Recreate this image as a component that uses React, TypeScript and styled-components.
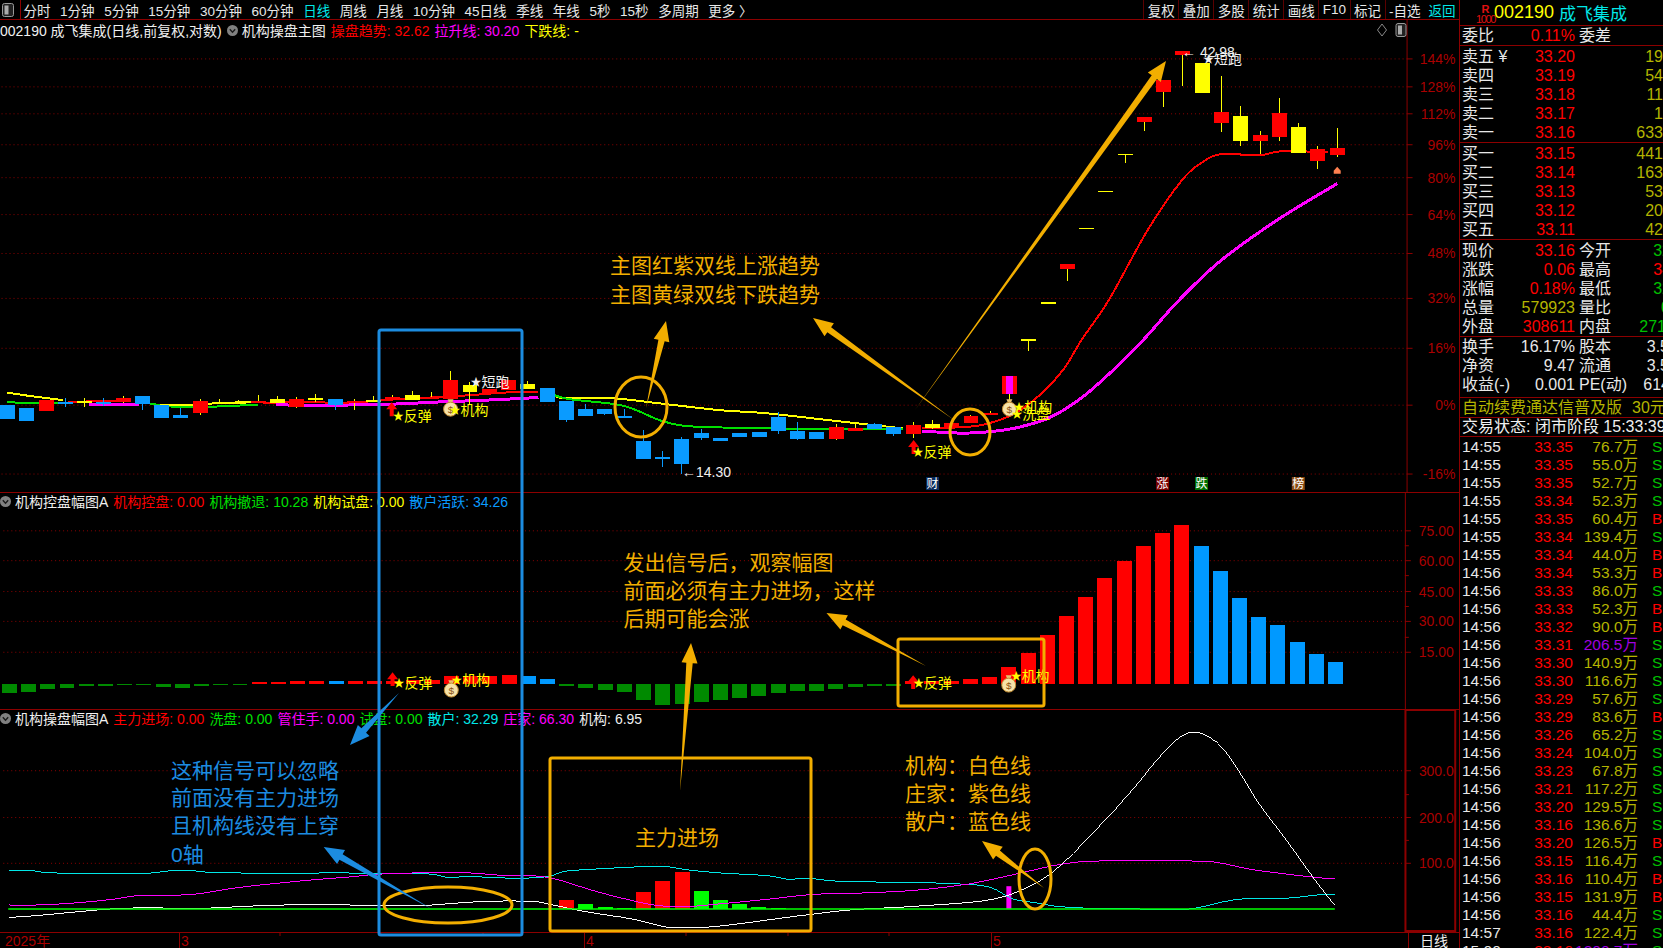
import styled, { createGlobalStyle } from "styled-components";

type Pt = [number, number];

const FONT = `"Liberation Sans", "Noto Sans CJK SC", sans-serif`;
const RULE = "#8c0000";
const RED = "#ff0000";
const YELLOW = "#ffff00";
const BLUE = "#0a9bff";
const GREEN = "#00e000";
const MAGENTA = "#ff00ff";
const CYAN = "#00e8e8";
const OLIVE = "#b4b400";
const AMBER = "#f2ae00";
const NOTE_BLUE = "#1c8ce0";
const SCALE_RED = "#aa0000";

const barX = (i: number) => 6 + 19.31 * i;

// traced from the crops, each with its own offset and horizontal scale
const fromCrop = (ox: number, oy: number, sx: number, pts: Pt[]): Pt[] =>
  pts.map(([x, y]) => [ox + x / sx, oy + y / 3]);
const cropA = (pts: Pt[]) => fromCrop(0, 340, 2.178, pts);
const cropB = (pts: Pt[]) => fromCrop(720, 340, 2.178, pts);
const cropC = (pts: Pt[]) => fromCrop(830, 0, 1.882, pts);
const cropD = (pts: Pt[]) => fromCrop(0, 708, 2.178, pts);
const cropE = (pts: Pt[]) => fromCrop(720, 708, 2.178, pts);
const toPoints = (pts: Pt[]) => pts.map((p) => p.join(",")).join(" ");

// catmull-rom through the traced points
const smoothPath = (pts: Pt[]) => {
  let d = `M${pts[0][0]} ${pts[0][1]}`;
  for (let i = 0; i < pts.length - 1; i++) {
    const p0 = pts[i - 1] || pts[i];
    const p1 = pts[i];
    const p2 = pts[i + 1];
    const p3 = pts[i + 2] || p2;
    const c1 = [p1[0] + (p2[0] - p0[0]) / 6, p1[1] + (p2[1] - p0[1]) / 6];
    const c2 = [p2[0] - (p3[0] - p1[0]) / 6, p2[1] - (p3[1] - p1[1]) / 6];
    d += `C${c1[0]} ${c1[1]} ${c2[0]} ${c2[1]} ${p2[0]} ${p2[1]}`;
  }
  return d;
};

type Kind = "r" | "y" | "b";
type Candle = [Kind, number, number, number?, number?];

const CANDLES: Candle[] = [
  ["b", 406, 420], ["b", 409, 422], ["r", 401, 412], ["b", 403, 404, 399, 408],
  ["y", 402, 403, 399, 408], ["b", 403, 404, 399, 407], ["r", 399, 403, 397, 404], ["b", 397, 405, 397, 411],
  ["b", 406, 419], ["b", 416, 419, 409, 419], ["r", 402, 414, 400, 416], ["y", 403, 405, 400, 405],
  ["y", 403, 405, 401, 405], ["r", 402, 404, 396, 404], ["y", 400, 404, 397, 404], ["r", 400, 408, 398, 409],
  ["y", 399, 401, 395, 403], ["b", 400, 406, 400, 411], ["r", 402, 404, 400, 411], ["y", 401, 403, 397, 403],
  ["r", 398, 399, 396, 399], ["y", 396, 401, 392, 401], ["r", 398, 399, 393, 399], ["r", 381, 400, 372, 400],
  ["y", 386, 393, 383, 405], ["r", 390, 395], ["r", 381, 391], ["y", 385, 390, 382, 390],
  ["b", 389, 403], ["b", 402, 421, 402, 423], ["b", 410, 417, 405, 417], ["b", 410, 415, 410, 416],
  ["b", 417, 419, 410, 419], ["b", 442, 460, 431, 460], ["b", 458, 459, 452, 468], ["b", 440, 465, 438, 475],
  ["b", 434, 439, 430, 441], ["b", 439, 442], ["b", 434, 438], ["b", 433, 438],
  ["b", 418, 432, 413, 435], ["b", 432, 440, 423, 441], ["b", 433, 440], ["r", 428, 440, 425, 441],
  ["r", 429, 432, 425, 432], ["b", 425, 430, 424, 430], ["b", 428, 435, 428, 437], ["r", 426, 435, 423, 439],
  ["y", 425, 429, 421, 430], ["r", 424, 429], ["r", 417, 424, 416, 424], ["r", 414, 416, 412, 416],
  ["r", 377, 395, 395, 410], ["y", 340, 340, 340, 352], ["y", 303, 303], ["r", 265, 270, 265, 282],
  ["y", 228, 228], ["y", 191, 191], ["y", 154, 154, 154, 163], ["r", 117, 122, 117, 131],
  ["r", 80, 92, 80, 107], ["r", 51, 55, 51, 86], ["y", 63, 93], ["r", 112, 123, 76, 132],
  ["y", 116, 141, 106, 146], ["r", 135, 141, 131, 154], ["r", 113, 137, 98, 141], ["y", 127, 153, 123, 153],
  ["r", 149, 161, 146, 169], ["r", 148, 155, 128, 157],
];

const TREND_LINES: { color: string; width: number; pts: Pt[] }[] = [
  { color: YELLOW, width: 2, pts: cropA([[12, 160], [60, 170], [135, 183]]) },
  { color: GREEN, width: 2, pts: cropA([[12, 188], [50, 192], [80, 192], [135, 190]]) },
  { color: RED, width: 2, pts: cropA([[145, 188], [180, 187], [280, 186]]) },
  { color: MAGENTA, width: 3, pts: cropA([[190, 196], [300, 197]]) },
  { color: GREEN, width: 2, pts: cropA([[325, 193], [380, 203], [470, 202], [560, 196]]) },
  { color: YELLOW, width: 2, pts: cropA([[345, 197], [415, 198], [470, 192], [560, 188]]) },
  { color: RED, width: 2, pts: cropA([[570, 193], [640, 188], [760, 191], [840, 182], [1000, 170], [1100, 160], [1170, 158]]) },
  { color: MAGENTA, width: 3, pts: cropA([[600, 196], [660, 199], [730, 198], [850, 195], [960, 188], [1040, 184], [1130, 178], [1172, 175]]) },
  { color: YELLOW, width: 2, pts: [...cropA([[1210, 174], [1240, 177], [1340, 178], [1420, 190], [1568, 213]]), ...cropB([[100, 222], [250, 245], [400, 268]])] },
  { color: GREEN, width: 2, pts: [...cropA([[1205, 167], [1240, 180], [1340, 195], [1380, 210], [1440, 245], [1490, 260], [1568, 265]]), ...cropB([[240, 270], [400, 270]])] },
  { color: RED, width: 2, pts: [...cropB([[440, 268], [530, 264], [580, 255], [640, 225], [700, 165], [750, 90], [790, 0]]), ...cropC([[527, 900], [600, 690], [665, 540], [705, 485], [740, 463], [810, 467], [850, 455], [940, 457]])] },
  { color: MAGENTA, width: 3, pts: [...cropB([[440, 276], [530, 282], [600, 276], [650, 265], [720, 235], [790, 175], [860, 90], [925, 0]]), ...cropC([[660, 900], [740, 780], [850, 655], [957, 552]])] },
];

const SWING_BASE = 684.5;
const SWING_BARS: [Kind | "g", number][] = [
  ["g", 9.3], ["g", 8.7], ["g", 5.7], ["g", 4.7], ["g", 2.7], ["g", 2.7], ["g", 1], ["g", 1], ["g", 3.7], ["g", 4.7],
  ["g", 2.7], ["g", 1.7], ["g", 1], ["r", 2], ["r", 2], ["r", 3], ["r", 3], ["b", 3], ["r", 3], ["r", 3],
  ["r", 3], ["r", 4], ["r", 4], ["r", 8], ["r", 8], ["r", 8], ["r", 9], ["b", 8], ["b", 5], ["g", 2.7],
  ["g", 4.7], ["g", 6.7], ["g", 8.7], ["g", 16.7], ["g", 21.7], ["g", 20.7], ["g", 18.7], ["g", 16.7], ["g", 14.7], ["g", 12.7],
  ["g", 9.7], ["g", 7.7], ["g", 7.7], ["g", 5.7], ["g", 3.7], ["g", 2.7], ["g", 2.7], ["r", 3], ["r", 3], ["r", 3],
  ["r", 5], ["r", 7], ["r", 17], ["r", 31], ["r", 49], ["r", 68], ["r", 87], ["r", 106], ["r", 123], ["r", 138],
  ["r", 151], ["r", 159], ["b", 138], ["b", 113], ["b", 86], ["b", 67], ["b", 59], ["b", 42], ["b", 30], ["b", 22],
];

const FUND_BASE = 910;
const FUND_BARS: [number, string, number][] = [
  [29, RED, 9], [30, "#00ff00", 5], [31, "#00ff00", 2], [32, "#00ff00", 1], [33, RED, 17], [34, RED, 28], [35, RED, 37],
  [36, "#00ff00", 18], [37, "#00ff00", 9], [38, "#00ff00", 5], [39, "#00ff00", 2], [40, "#00ff00", 1],
];

const FUND_LINES: { color: string; pts: Pt[] }[] = [
  { color: CYAN, pts: [...cropD([[12, 490], [60, 490], [90, 495], [160, 499], [300, 499], [370, 490], [410, 490], [470, 496], [660, 499], [700, 497], [830, 498], [930, 500], [975, 511], [1020, 508], [1120, 513], [1190, 508], [1230, 492], [1300, 485], [1400, 478], [1450, 478], [1500, 488], [1568, 497]]), ...cropE([[100, 505], [150, 516], [190, 513], [270, 523], [400, 525], [520, 530], [590, 540], [640, 575], [690, 587], [740, 598], [820, 604], [900, 605], [1020, 607], [1130, 577], [1240, 573], [1310, 563], [1345, 563]])] },
  { color: MAGENTA, pts: [...cropD([[12, 593], [35, 595], [130, 590], [230, 578], [300, 565], [410, 562], [520, 540], [660, 520], [750, 510], [810, 502], [870, 498], [1000, 496], [1100, 505], [1190, 510], [1290, 550], [1360, 575], [1430, 595], [1500, 598], [1568, 590]]), ...cropE([[100, 577], [200, 562], [300, 558], [420, 550], [520, 535], [600, 515], [680, 490], [750, 470], [830, 461], [1030, 461], [1090, 466], [1170, 488], [1300, 510], [1345, 514]])] },
  { color: "#ffffff", pts: [...cropD([[12, 631], [60, 627], [140, 617], [240, 605], [330, 602], [410, 605], [560, 596], [690, 592], [830, 596], [920, 595], [1000, 587], [1070, 582], [1160, 583], [1200, 593], [1280, 615], [1380, 637], [1450, 660], [1500, 661], [1568, 657]]), ...cropE([[180, 625], [290, 608], [420, 598], [590, 578], [680, 535], [740, 480], [810, 385], [900, 250], [960, 150], [1010, 85], [1050, 75], [1095, 115], [1135, 190], [1180, 290], [1240, 400], [1300, 515], [1345, 595]])] },
];

const MAIN_SCALE: [string, number][] = [
  ["144%", 59], ["128%", 87], ["112%", 114], ["96%", 145], ["80%", 178], ["64%", 215],
  ["48%", 254], ["32%", 299], ["16%", 349], ["0%", 406], ["-16%", 475],
];
const SWING_SCALE: [string, number][] = [["75.00", 531], ["60.00", 561], ["45.00", 592], ["30.00", 622], ["15.00", 653]];
const FUND_SCALE: [string, number][] = [["300.0", 771], ["200.0", 818], ["100.0", 864]];

const SELL = [["卖五 ¥", "33.20", "19"], ["卖四", "33.19", "54"], ["卖三", "33.18", "11"], ["卖二", "33.17", "1"], ["卖一", "33.16", "633"]];
const BUY = [["买一", "33.15", "441"], ["买二", "33.14", "163"], ["买三", "33.13", "53"], ["买四", "33.12", "20"], ["买五", "33.11", "42"]];

const TRADES: [string, string, string, "S" | "B"][] = [
  ["14:55", "33.35", "76.7万", "S"], ["14:55", "33.35", "55.0万", "S"], ["14:55", "33.35", "52.7万", "S"],
  ["14:55", "33.34", "52.3万", "S"], ["14:55", "33.35", "60.4万", "B"], ["14:55", "33.34", "139.4万", "S"],
  ["14:55", "33.34", "44.0万", "B"], ["14:56", "33.34", "53.3万", "B"], ["14:56", "33.33", "86.0万", "S"],
  ["14:56", "33.33", "52.3万", "B"], ["14:56", "33.32", "90.0万", "B"], ["14:56", "33.31", "206.5万", "S"],
  ["14:56", "33.30", "140.9万", "S"], ["14:56", "33.30", "116.6万", "S"], ["14:56", "33.29", "57.6万", "S"],
  ["14:56", "33.29", "83.6万", "B"], ["14:56", "33.26", "65.2万", "S"], ["14:56", "33.24", "104.0万", "S"],
  ["14:56", "33.23", "67.8万", "S"], ["14:56", "33.21", "117.2万", "S"], ["14:56", "33.20", "129.5万", "S"],
  ["14:56", "33.16", "136.6万", "S"], ["14:56", "33.20", "126.5万", "B"], ["14:56", "33.15", "116.4万", "S"],
  ["14:56", "33.16", "110.4万", "B"], ["14:56", "33.15", "131.9万", "B"], ["14:56", "33.16", "44.4万", "S"],
  ["14:57", "33.16", "122.4万", "S"], ["15:00", "33.16", "1200.7万", "S"],
];

const PERIODS = ["分时", "1分钟", "5分钟", "15分钟", "30分钟", "60分钟", "日线", "周线", "月线", "10分钟", "45日线", "季线", "年线", "5秒", "15秒", "多周期", "更多 〉"];
const TOOLS = ["复权", "叠加", "多股", "统计", "画线", "F10", "标记", "-自选", "返回"];

function Arrow({ from, to, color }: { from: Pt; to: Pt; color: string }) {
  const dx = to[0] - from[0];
  const dy = to[1] - from[1];
  const len = Math.hypot(dx, dy);
  const ux = dx / len;
  const uy = dy / len;
  const nx = -uy;
  const ny = ux;
  const neck: Pt = [to[0] - ux * 20, to[1] - uy * 20];
  const at = (base: Pt, off: number): Pt => [base[0] + nx * off, base[1] + ny * off];
  const pts = [from, at(neck, 3.2), at(neck, 8), to, at(neck, -8), at(neck, -3.2)];
  return <polygon points={toPoints(pts)} fill={color} />;
}

function MoneyBag({ x, y }: { x: number; y: number }) {
  return (
    <g>
      <path d={`M${x - 3} ${y - 10}h6l-1.5 3.5h-3z`} fill="#e8c070" />
      <circle cx={x} cy={y} r={7} fill="#f6e2a8" stroke="#c08a30" />
      <ChartLabel x={x} y={y} $size={10} $color="#8a5010" textAnchor="middle">
        $
      </ChartLabel>
    </g>
  );
}

function UpMark({ x, y }: { x: number; y: number }) {
  return <path d={`M${x} ${y}l5.5 7h-3.5v7h-4v-7h-3.5z`} fill={RED} />;
}

function SignalLabel({ x, y, text, color = YELLOW }: { x: number; y: number; text: string; color?: string }) {
  return (
    <ChartLabel x={x} y={y} $size={14} $color={color}>
      <StarMark>★</StarMark>
      {text}
    </ChartLabel>
  );
}

function Scale({ rows }: { rows: [string, number][] }) {
  return (
    <>
      {rows.map(([label, y]) => (
        <g key={label}>
          <GridLine x1={0} x2={1408} y1={y} y2={y} />
          <line x1={1408} x2={1414} y1={y} y2={y} stroke={RULE} />
          <ChartLabel x={1457} y={y} $size={14} $color={SCALE_RED} textAnchor="end">
            {label}
          </ChartLabel>
        </g>
      ))}
      <line x1={1408.5} x2={1408.5} y1={0} y2={948} stroke={RULE} />
    </>
  );
}

function MainPlot() {
  return (
    <PaneCanvas viewBox="0 20 1459 473">
      <Scale rows={MAIN_SCALE} />
      {TREND_LINES.map((l, i) => (
        <path key={i} d={smoothPath(l.pts)} fill="none" stroke={l.color} strokeWidth={l.width} shapeRendering="crispEdges" />
      ))}
      {CANDLES.map(([kind, top, bottom, wickTop, wickBottom], i) => {
        const x = barX(i);
        const color = kind === "r" ? RED : kind === "y" ? YELLOW : BLUE;
        return (
          <g key={i} shapeRendering="crispEdges">
            {wickTop !== undefined && (
              <line x1={x} x2={x} y1={wickTop} y2={wickBottom} stroke={kind === "b" ? BLUE : YELLOW} />
            )}
            <rect x={x - 7.5} y={top} width={15} height={Math.max(bottom - top, 1.5)} fill={color} />
            {i === 52 && <rect x={x - 3.5} y={top} width={7} height={bottom - top} fill={MAGENTA} />}
          </g>
        );
      })}
      <path d="M1338.5 167l3.5 4v3h-7v-3z" fill="#ff8050" />
      <UpMark x={391} y={403} />
      <SignalLabel x={392} y={417} text="反弹" />
      <MoneyBag x={450} y={410} />
      <SignalLabel x={449} y={411} text="机构" />
      <SignalLabel x={470} y={383} text="短跑" color="#f0f0f0" />
      <UpMark x={914} y={441} />
      <SignalLabel x={913} y={453} text="反弹" />
      <MoneyBag x={1010} y={410} />
      <SignalLabel x={1012} y={415} text="洗盘" />
      <SignalLabel x={1014} y={408} text="机构" />
      <ChartLabel x={1183} y={52} $size={14} $color="#f0f0f0">
        ← 42.98
      </ChartLabel>
      <SignalLabel x={1204} y={59} text="短跑" color="#f0f0f0" />
      <ChartLabel x={682} y={473} $size={14} $color="#f0f0f0">
        ←14.30
      </ChartLabel>
      <EventTag x={933} label="财" fill="#0a2a5c" />
      <EventTag x={1163.5} label="涨" fill="#7a0000" />
      <EventTag x={1202.5} label="跌" fill="#007000" />
      <EventTag x={1299.5} label="榜" fill="#8a4a10" />
    </PaneCanvas>
  );
}

function EventTag({ x, label, fill }: { x: number; label: string; fill: string }) {
  return (
    <g>
      <rect x={x - 6.5} y={478} width={13} height={13} fill={fill} />
      <ChartLabel x={x} y={484.5} $size={12} $color="#ffffff" textAnchor="middle">
        {label}
      </ChartLabel>
    </g>
  );
}

function SwingPlot() {
  const colors = { r: RED, b: "#0099ff", g: "#008a00", y: YELLOW };
  return (
    <PaneCanvas viewBox="0 493 1459 217">
      <Scale rows={SWING_SCALE} />
      {[546, 576, 607, 638].map((y) => (
        <line key={y} x1={1408} x2={1412} y1={y} y2={y} stroke={RULE} />
      ))}
      {SWING_BARS.map(([kind, h], i) => (
        <rect
          key={i}
          shapeRendering="crispEdges"
          x={barX(i) - 7.5}
          y={kind === "g" ? SWING_BASE : SWING_BASE - h}
          width={15}
          height={h}
          fill={colors[kind]}
        />
      ))}
      <UpMark x={391} y={673} />
      <SignalLabel x={392} y={684} text="反弹" />
      <MoneyBag x={450} y={691} />
      <SignalLabel x={450} y={681} text="机构" />
      <UpMark x={914} y={676} />
      <SignalLabel x={914} y={684} text="反弹" />
      <MoneyBag x={1010} y={686} />
      <SignalLabel x={1012} y={677} text="机构" />
    </PaneCanvas>
  );
}

function FundPlot() {
  return (
    <PaneCanvas viewBox="0 710 1459 223">
      <Scale rows={FUND_SCALE} />
      {[795, 841].map((y) => (
        <line key={y} x1={1408} x2={1412} y1={y} y2={y} stroke={RULE} />
      ))}
      <rect x={1408.5} y={710} width={50} height={222} fill="none" stroke={RULE} strokeWidth={2} />
      {FUND_BARS.map(([i, color, h]) => (
        <rect key={i} shapeRendering="crispEdges" x={barX(i) - 7.5} y={FUND_BASE - h} width={15} height={h} fill={color} />
      ))}
      <rect x={barX(52) - 2.5} y={887} width={5} height={23} fill={MAGENTA} />
      {FUND_LINES.map((l) => (
        <path key={l.color} d={smoothPath(l.pts)} fill="none" stroke={l.color} strokeWidth={1} shapeRendering="crispEdges" />
      ))}
      <line x1={5} x2={1337.5} y1={910} y2={910} stroke="#00ff00" strokeWidth={1.5} />
    </PaneCanvas>
  );
}

function Annotations() {
  return (
    <Overlay viewBox="0 0 1459 948">
      <g fill="none" stroke={NOTE_BLUE} strokeWidth={3}>
        <rect x={379} y={330} width={143} height={605} rx={2} />
      </g>
      <g fill="none" stroke={AMBER} strokeWidth={3}>
        <ellipse cx={641} cy={407} rx={26} ry={30} />
        <ellipse cx={970} cy={432} rx={20} ry={23} />
        <ellipse cx={448} cy={905} rx={64} ry={18} />
        <ellipse cx={1035} cy={879} rx={16} ry={30} />
        <rect x={898} y={639} width={146} height={67} rx={2} />
        <rect x={550} y={758} width={261} height={173} rx={2} />
      </g>
      <Arrow from={[915, 410]} to={[1166, 61]} color={AMBER} />
      <Arrow from={[954, 420]} to={[813, 318]} color={AMBER} />
      <Arrow from={[646, 408]} to={[666, 321]} color={AMBER} />
      <Arrow from={[926, 666]} to={[826.5, 613]} color={AMBER} />
      <Arrow from={[680, 791]} to={[691, 643]} color={AMBER} />
      <Arrow from={[1044, 888]} to={[982, 841]} color={AMBER} />
      <Arrow from={[399, 693]} to={[350, 745]} color={NOTE_BLUE} />
      <Arrow from={[431.6, 909]} to={[323.7, 847]} color={NOTE_BLUE} />
      <NoteLine x={610} y={265}>主图红紫双线上涨趋势</NoteLine>
      <NoteLine x={610} y={294}>主图黄绿双线下跌趋势</NoteLine>
      <NoteLine x={623.5} y={562}>发出信号后，观察幅图</NoteLine>
      <NoteLine x={623.5} y={590}>前面必须有主力进场，这样</NoteLine>
      <NoteLine x={623.5} y={618}>后期可能会涨</NoteLine>
      <NoteLine x={635} y={837}>主力进场</NoteLine>
      <NoteLine x={905} y={765}>机构：白色线</NoteLine>
      <NoteLine x={905} y={793}>庄家：紫色线</NoteLine>
      <NoteLine x={905} y={821}>散户：蓝色线</NoteLine>
      <NoteLine x={171} y={770} $color={NOTE_BLUE}>这种信号可以忽略</NoteLine>
      <NoteLine x={171} y={797} $color={NOTE_BLUE}>前面没有主力进场</NoteLine>
      <NoteLine x={171} y={825} $color={NOTE_BLUE}>且机构线没有上穿</NoteLine>
      <NoteLine x={171} y={854} $color={NOTE_BLUE}>0轴</NoteLine>
    </Overlay>
  );
}

function FoldMark() {
  return (
    <FoldIcon viewBox="0 0 11 11">
      <circle cx={5.5} cy={5.5} r={5.5} fill="#808080" />
      <path d="M2.8 4.2l2.7 3 2.7-3" fill="none" stroke="#1a1a1a" strokeWidth={1.4} />
    </FoldIcon>
  );
}

export default function App() {
  return (
    <Page>
      <GlobalStyle />
      <ChartColumn>
        <Toolbar>
          <PanelToggle viewBox="0 0 12 14">
            <rect x={0.5} y={0.5} width={11} height={13} rx={2} fill="#222" stroke="#999" />
            <rect x={2.5} y={2.5} width={4} height={9} fill="#aaa" />
          </PanelToggle>
          <PeriodList>
            {PERIODS.map((p) => (
              <Period key={p} $active={p === "日线"}>
                {p}
              </Period>
            ))}
          </PeriodList>
          <ToolList>
            {TOOLS.map((t) => (
              <ToolCell key={t} $active={t === "返回"}>
                {t}
              </ToolCell>
            ))}
          </ToolList>
        </Toolbar>

        <Pane $height={473}>
          <MainPlot />
          <Legend $height={20}>
            <LegendItem $color="#f0f0f0">002190 成飞集成(日线,前复权,对数)</LegendItem>
            <FoldMark />
            <LegendItem $color="#f0f0f0">机构操盘主图</LegendItem>
            <LegendItem $color={RED}>操盘趋势: 32.62</LegendItem>
            <LegendItem $color={MAGENTA}>拉升线: 30.20</LegendItem>
            <LegendItem $color={YELLOW}>下跌线: -</LegendItem>
          </Legend>
          <PaneTools viewBox="0 0 30 16">
            <path d="M5 2l4.5 6L5 14 .5 8z" fill="none" stroke="#888" />
            <rect x={19} y={1.5} width={10} height={13} rx={2} fill="#222" stroke="#999" />
            <rect x={21} y={3.5} width={4} height={9} fill="#aaa" />
          </PaneTools>
        </Pane>

        <Pane $height={217}>
          <SwingPlot />
          <Legend $height={16}>
            <FoldMark />
            <LegendItem $color="#f0f0f0">机构控盘幅图A</LegendItem>
            <LegendItem $color={RED}>机构控盘: 0.00</LegendItem>
            <LegendItem $color={GREEN}>机构撤退: 10.28</LegendItem>
            <LegendItem $color={YELLOW}>机构试盘: 0.00</LegendItem>
            <LegendItem $color={BLUE}>散户活跃: 34.26</LegendItem>
          </Legend>
        </Pane>

        <Pane $height={223}>
          <FundPlot />
          <Legend $height={16}>
            <FoldMark />
            <LegendItem $color="#f0f0f0">机构操盘幅图A</LegendItem>
            <LegendItem $color={RED}>主力进场: 0.00</LegendItem>
            <LegendItem $color={GREEN}>洗盘: 0.00</LegendItem>
            <LegendItem $color={MAGENTA}>管住手: 0.00</LegendItem>
            <LegendItem $color={GREEN}>试盘: 0.00</LegendItem>
            <LegendItem $color={CYAN}>散户: 32.29</LegendItem>
            <LegendItem $color={MAGENTA}>庄家: 66.30</LegendItem>
            <LegendItem $color="#f0f0f0">机构: 6.95</LegendItem>
          </Legend>
        </Pane>

        <DateAxis viewBox="0 933 1459 15">
          {[179.5, 584.5, 991.5].map((x) => (
            <line key={x} x1={x} x2={x} y1={933} y2={948} stroke={RULE} />
          ))}
          {[280, 381, 483, 686, 788, 889].map((x) => (
            <line key={x} x1={x} x2={x} y1={933} y2={936} stroke={RULE} />
          ))}
          <line x1={1408.5} x2={1408.5} y1={933} y2={948} stroke={RULE} />
          <ChartLabel x={5} y={941} $size={14} $color={SCALE_RED}>2025年</ChartLabel>
          <ChartLabel x={181} y={941} $size={14} $color={SCALE_RED}>3</ChartLabel>
          <ChartLabel x={586} y={941} $size={14} $color={SCALE_RED}>4</ChartLabel>
          <ChartLabel x={993} y={941} $size={14} $color={SCALE_RED}>5</ChartLabel>
          <ChartLabel x={1420} y={941} $size={14} $color="#f0f0f0">日线</ChartLabel>
        </DateAxis>

        <Annotations />
      </ChartColumn>

      <QuotePanel>
        <QuoteHeader>
          <RankBadge>
            <RankLetter>R</RankLetter>
            <RankValue>1000</RankValue>
          </RankBadge>
          <StockCode>002190</StockCode>
          <StockName>成飞集成</StockName>
        </QuoteHeader>

        <Section $pad="0">
          <QuoteRow>
            <span>委比</span>
            <Num $color={RED}>0.11%</Num>
            <SideLabel>委差</SideLabel>
          </QuoteRow>
        </Section>

        <Section $pad="1px 0 0">
          {SELL.map(([label, price, qty]) => (
            <QuoteRow key={label}>
              <span>{label}</span>
              <Num $color={RED}>{price}</Num>
              <span />
              <EdgeNum $color={OLIVE}>{qty}</EdgeNum>
            </QuoteRow>
          ))}
        </Section>

        <Section $pad="1px 0 0">
          {BUY.map(([label, price, qty]) => (
            <QuoteRow key={label}>
              <span>{label}</span>
              <Num $color={RED}>{price}</Num>
              <span />
              <EdgeNum $color={OLIVE}>{qty}</EdgeNum>
            </QuoteRow>
          ))}
        </Section>

        <Section $pad="1px 0 0">
          <QuoteRow>
            <span>现价</span>
            <Num $color={RED}>33.16</Num>
            <SideLabel>今开</SideLabel>
            <EdgeNum $color="#00c000" $clip={8}>32</EdgeNum>
          </QuoteRow>
          <QuoteRow>
            <span>涨跌</span>
            <Num $color={RED}>0.06</Num>
            <SideLabel>最高</SideLabel>
            <EdgeNum $color={RED} $clip={8}>34</EdgeNum>
          </QuoteRow>
          <QuoteRow>
            <span>涨幅</span>
            <Num $color={RED}>0.18%</Num>
            <SideLabel>最低</SideLabel>
            <EdgeNum $color="#00c000" $clip={8}>32</EdgeNum>
          </QuoteRow>
          <QuoteRow>
            <span>总量</span>
            <Num $color={OLIVE}>579923</Num>
            <SideLabel>量比</SideLabel>
            <EdgeNum $color="#00c000" $clip={7}>0</EdgeNum>
          </QuoteRow>
          <QuoteRow>
            <span>外盘</span>
            <Num $color={RED}>308611</Num>
            <SideLabel>内盘</SideLabel>
            <EdgeNum $color="#00c000" $clip={3}>271</EdgeNum>
          </QuoteRow>
        </Section>

        <Section $pad="0 0 3px">
          <QuoteRow>
            <span>换手</span>
            <Num $color="#e8e8e8">16.17%</Num>
            <SideLabel>股本</SideLabel>
            <EdgeNum $color="#e8e8e8" $clip={6}>3.5</EdgeNum>
          </QuoteRow>
          <QuoteRow>
            <span>净资</span>
            <Num $color="#e8e8e8">9.47</Num>
            <SideLabel>流通</SideLabel>
            <EdgeNum $color="#e8e8e8" $clip={6}>3.5</EdgeNum>
          </QuoteRow>
          <QuoteRow>
            <span>收益(-)</span>
            <Num $color="#e8e8e8">0.001</Num>
            <SideLabel>PE(动)</SideLabel>
            <EdgeNum $color="#e8e8e8" $clip={7}>614</EdgeNum>
          </QuoteRow>
        </Section>

        <Section $pad="0">
          <AdRow>
            <span>自动续费通达信普及版</span>
            <span>30元</span>
          </AdRow>
        </Section>

        <Section $pad="0">
          <StatusRow>交易状态: 闭市阶段 15:33:39</StatusRow>
        </Section>

        <TradeList>
          {TRADES.map(([time, price, volume, side], i) => (
            <TradeRow key={i}>
              <span>{time}</span>
              <Num $color={RED}>{price}</Num>
              <Num $color={parseFloat(volume) > 200 ? "#a000e0" : OLIVE}>{volume}</Num>
              <TradeSide $side={side}>{side}</TradeSide>
            </TradeRow>
          ))}
        </TradeList>
      </QuotePanel>
    </Page>
  );
}

const GlobalStyle = createGlobalStyle`
  html, body {
    margin: 0;
    padding: 0;
    background: #000;
    overflow: hidden;
  }
  * {
    box-sizing: border-box;
  }
`;

const Page = styled.div`
  display: flex;
  width: 1663px;
  height: 948px;
  overflow: hidden;
  background: #000;
  color: #e8e8e8;
  font-family: ${FONT};
`;

const ChartColumn = styled.main`
  position: relative;
  display: flex;
  flex-direction: column;
  width: 1459px;
  flex: none;
`;

const Toolbar = styled.nav`
  display: flex;
  align-items: center;
  height: 20px;
  flex: none;
  border-bottom: 1px solid ${RULE};
  font-size: 13.5px;
`;

const PanelToggle = styled.svg`
  width: 12px;
  height: 14px;
  margin: 0 6px 0 2px;
  flex: none;
`;

const PeriodList = styled.div`
  display: flex;
  align-items: center;
  gap: 9.6px;
  height: 100%;
  padding-left: 2.5px;
  border-left: 1px solid ${RULE};
  white-space: nowrap;
`;

const Period = styled.span<{ $active?: boolean }>`
  color: ${(p) => (p.$active ? CYAN : "#e8e8e8")};
`;

const ToolList = styled.div`
  display: flex;
  align-items: center;
  height: 100%;
  margin-left: auto;
  white-space: nowrap;
`;

const ToolCell = styled.span<{ $active?: boolean }>`
  display: flex;
  align-items: center;
  height: 100%;
  padding: 0 3.5px;
  color: ${(p) => (p.$active ? CYAN : "#e8e8e8")};
  border-left: 1px solid ${(p) => (p.$active ? "transparent" : "#5a0000")};
`;

const Pane = styled.section<{ $height: number }>`
  position: relative;
  height: ${(p) => p.$height}px;
  flex: none;
  border-bottom: 1px solid ${RULE};
`;

const PaneCanvas = styled.svg`
  position: absolute;
  left: 0;
  top: 0;
  width: 1459px;
  height: 100%;
  overflow: hidden;
`;

const GridLine = styled.line`
  stroke: #8c0000;
  stroke-width: 1;
  stroke-dasharray: 1 3;
`;

const ChartLabel = styled.text<{ $size: number; $color: string }>`
  font-family: ${FONT};
  font-size: ${(p) => p.$size}px;
  fill: ${(p) => p.$color};
  dominant-baseline: central;
`;

const StarMark = styled.tspan`
  font-size: 11px;
`;

const NoteLine = styled.text<{ $color?: string }>`
  font-family: ${FONT};
  font-size: 21px;
  fill: ${(p) => p.$color || AMBER};
  dominant-baseline: central;
`;

const Legend = styled.div<{ $height: number }>`
  position: relative;
  display: flex;
  align-items: center;
  gap: 5px;
  height: ${(p) => p.$height}px;
  font-size: 14px;
  white-space: nowrap;
`;

const LegendItem = styled.span<{ $color: string }>`
  color: ${(p) => p.$color};
`;

const FoldIcon = styled.svg`
  width: 11px;
  height: 11px;
  flex: none;
  margin-right: -1px;
`;

const PaneTools = styled.svg`
  position: absolute;
  left: 1377px;
  top: 2px;
  width: 30px;
  height: 16px;
`;

const DateAxis = styled.svg`
  width: 1459px;
  height: 15px;
  flex: none;
`;

const Overlay = styled.svg`
  position: absolute;
  left: 0;
  top: 0;
  width: 1459px;
  height: 948px;
  pointer-events: none;
`;

const QuotePanel = styled.aside`
  display: flex;
  flex-direction: column;
  width: 204px;
  flex: none;
  height: 948px;
  overflow: hidden;
  border-left: 1px solid ${RULE};
  font-size: 16px;
`;

const QuoteHeader = styled.header`
  display: flex;
  align-items: center;
  height: 26px;
  flex: none;
  padding-left: 17px;
  border-bottom: 1px solid ${RULE};
`;

const RankBadge = styled.div`
  display: flex;
  flex-direction: column;
  align-items: center;
  width: 17px;
  padding-top: 3px;
  color: #e01010;
  line-height: 10px;
`;

const RankLetter = styled.span`
  font-size: 11px;
  font-weight: bold;
`;

const RankValue = styled.span`
  font-size: 11px;
  letter-spacing: -1.4px;
`;

const StockCode = styled.span`
  font-size: 18px;
  color: ${YELLOW};
`;

const StockName = styled.span`
  margin-left: 5px;
  font-size: 17px;
  color: ${CYAN};
`;

const Section = styled.div<{ $pad: string }>`
  flex: none;
  padding: ${(p) => p.$pad};
  border-bottom: 1px solid ${RULE};
`;

const QuoteRow = styled.div`
  display: grid;
  grid-template-columns: 52px 61px 56px 1fr;
  height: 19px;
  padding-left: 2px;
  line-height: 19px;
  white-space: nowrap;
`;

const Num = styled.span<{ $color: string }>`
  text-align: right;
  color: ${(p) => p.$color};
`;

const SideLabel = styled.span`
  padding-left: 4px;
`;

const EdgeNum = styled.span<{ $color: string; $clip?: number }>`
  justify-self: end;
  color: ${(p) => p.$color};
  margin-right: ${(p) => -(p.$clip || 0)}px;
`;

const AdRow = styled.div`
  display: flex;
  gap: 10px;
  height: 19px;
  padding-left: 2px;
  line-height: 19px;
  color: ${OLIVE};
  white-space: nowrap;
`;

const StatusRow = styled.div`
  height: 18px;
  padding-left: 2px;
  line-height: 18px;
  white-space: nowrap;
  color: #f0f0f0;
`;

const TradeList = styled.div`
  padding-top: 1px;
  font-size: 15.5px;
`;

const TradeRow = styled.div`
  display: grid;
  grid-template-columns: 50px 61px 65px 1fr;
  height: 18px;
  padding-left: 2px;
  line-height: 18px;
  white-space: nowrap;
`;

const TradeSide = styled.span<{ $side: "S" | "B" }>`
  padding-left: 14px;
  color: ${(p) => (p.$side === "S" ? "#00c000" : RED)};
`;
